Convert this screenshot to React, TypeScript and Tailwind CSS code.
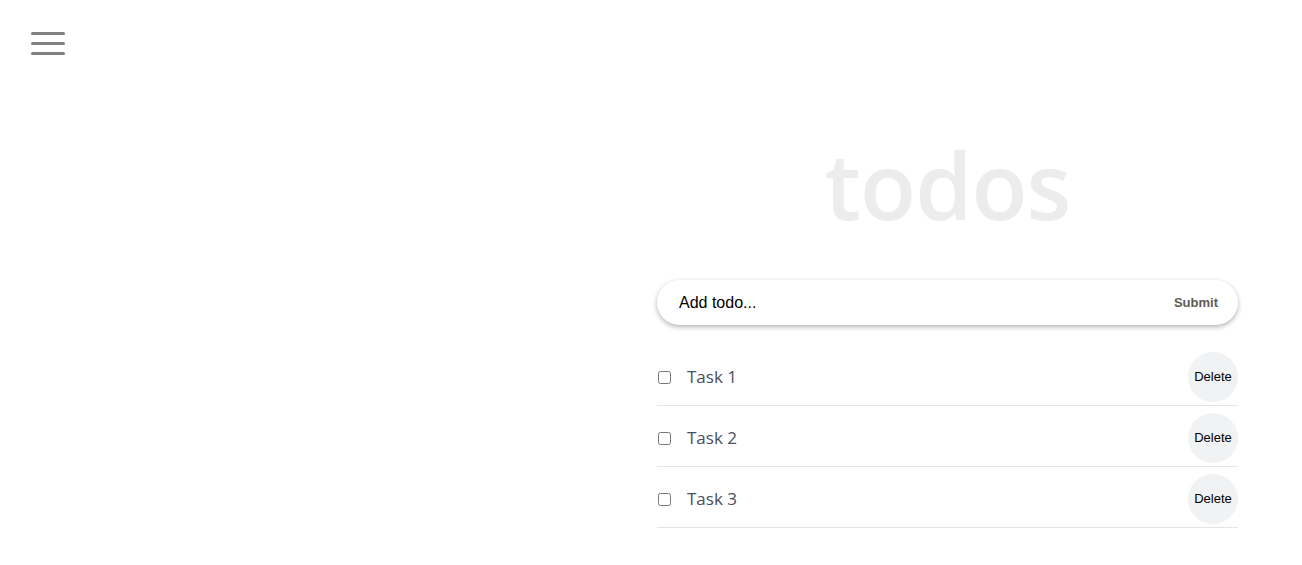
import React, { useState } from 'react';

interface Todo {
  id: number;
  text: string;
  done: boolean;
}

const INITIAL_TODOS: Todo[] = [
  { id: 1, text: 'Task 1', done: false },
  { id: 2, text: 'Task 2', done: false },
  { id: 3, text: 'Task 3', done: false },
];

const MenuButton = () => (
  <button type="button" className="flex flex-col gap-[7px] w-[34px] cursor-pointer">
    <span className="block h-[3px] w-full rounded-full bg-[#808080]" />
    <span className="block h-[3px] w-full rounded-full bg-[#808080]" />
    <span className="block h-[3px] w-full rounded-full bg-[#808080]" />
  </button>
);

export default function App() {
  const [todos, setTodos] = useState<Todo[]>(INITIAL_TODOS);
  const [draft, setDraft] = useState('');

  const addTodo = (e: React.FormEvent) => {
    e.preventDefault();
    if (!draft.trim()) return;
    setTodos([...todos, { id: Date.now(), text: draft.trim(), done: false }]);
    setDraft('');
  };

  return (
    <div className="min-h-screen bg-white flex font-['Liberation_Sans',Arial,sans-serif]">
      {/* Left side: menu */}
      <div className="flex-1 pl-[31px] pt-[32px]">
        <MenuButton />
      </div>

      {/* Todo column */}
      <div className="w-[581px] mr-[64px] pt-[139px]">
        <h1 className="text-center text-[92px] leading-none font-semibold text-[#ececec] font-['Open_Sans','Noto_Sans',sans-serif] tracking-[-1px] mb-[49px] select-none">
          todos
        </h1>

        <form
          onSubmit={addTodo}
          className="h-[45px] rounded-full bg-white shadow-[0_2px_5px_rgba(0,0,0,0.3)] flex items-center pl-[22px] pr-[20px]"
        >
          <input
            type="text"
            value={draft}
            onChange={(e) => setDraft(e.target.value)}
            placeholder="Add todo..."
            className="flex-1 bg-transparent outline-none text-[16px] text-black placeholder:text-black"
          />
          <button type="submit" className="text-[13px] font-bold text-[#5f5a55] cursor-pointer">
            Submit
          </button>
        </form>

        <ul className="mt-[20px]">
          {todos.map((todo) => (
            <li
              key={todo.id}
              className="flex items-center pt-[7px] pb-[3px] border-b border-[#e5e5e5]"
            >
              <input
                type="checkbox"
                checked={todo.done}
                onChange={() =>
                  setTodos(todos.map((t) => (t.id === todo.id ? { ...t, done: !t.done } : t)))
                }
                className="w-[13px] h-[13px] m-0 ml-px"
              />
              <span
                className={`ml-[16px] flex-1 text-[17px] text-[#4a4f5c] font-['Open_Sans','Noto_Sans',sans-serif] ${
                  todo.done ? 'line-through' : ''
                }`}
              >
                {todo.text}
              </span>
              <button
                type="button"
                onClick={() => setTodos(todos.filter((t) => t.id !== todo.id))}
                className="w-[50px] h-[50px] rounded-full bg-[#f1f2f4] text-[13px] text-black cursor-pointer"
              >
                Delete
              </button>
            </li>
          ))}
        </ul>
      </div>
    </div>
  );
}
